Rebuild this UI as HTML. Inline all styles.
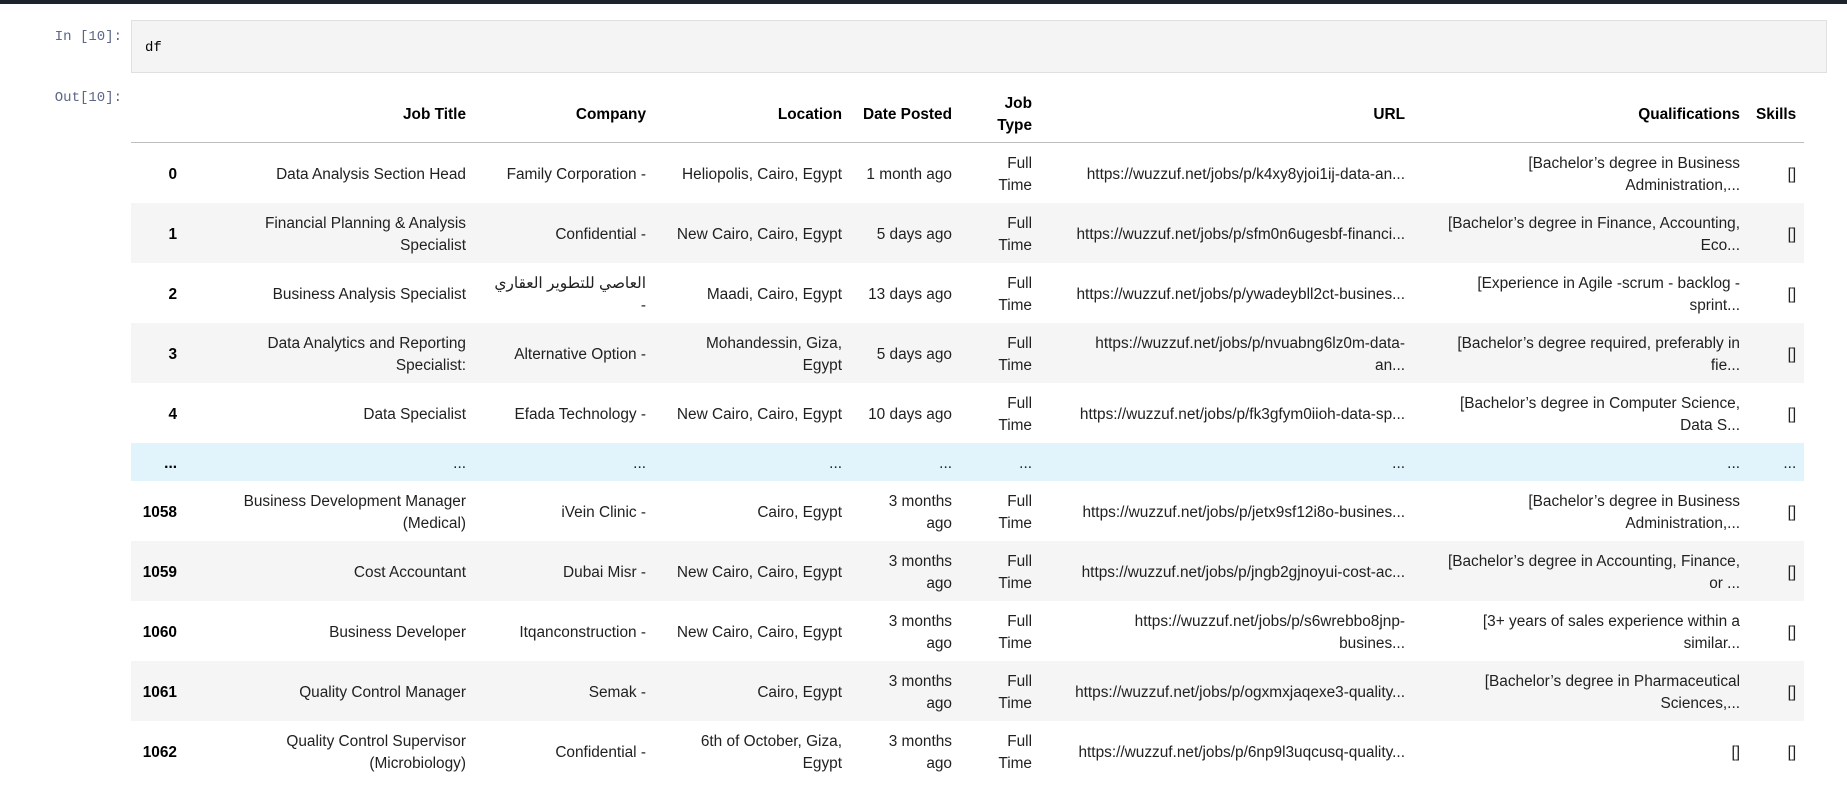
<!DOCTYPE html>
<html><head><meta charset="utf-8"><style>
body{margin:0;width:1847px;height:790px;overflow:hidden;background:#fff;font-family:"Liberation Sans","Noto Sans CJK SC",sans-serif;color:#212121;position:relative}
.bar{position:absolute;left:0;top:0;width:1847px;height:4px;background:#1d232a}
.prompt{position:absolute;font-family:"Liberation Mono",monospace;font-size:14px;color:#5d6685;text-align:right;width:120px;left:2px}
.code{position:absolute;left:131px;top:20px;width:1694px;height:51px;background:#f4f4f4;border:1px solid #e0e0e0;font-family:"Liberation Mono",monospace;font-size:14px}
.code span{position:absolute;left:13px;top:19px;color:#000}
table{position:absolute;left:131px;top:88px;border-collapse:collapse;table-layout:fixed;font-size:15.4px;line-height:22px}
td,th{text-align:right;padding:0 8px;white-space:nowrap;vertical-align:middle}
th{height:54px;font-weight:bold;border-bottom:1px solid #bdbdbd;color:#000}
td{height:57px;padding-top:3px}
td:first-child{font-weight:bold;color:#000;padding-right:36px}
tr.s td{background:#f5f5f5}
tr.e td{height:35px;background:#e1f4fc}
</style></head><body>
<div class="bar"></div>
<div class="prompt" style="top:29px">In [10]:</div>
<div class="code"><span>df</span></div>
<div class="prompt" style="top:90px">Out[10]:</div>
<table>
<colgroup><col style="width:82px"><col style="width:261px"><col style="width:180px"><col style="width:196px"><col style="width:110px"><col style="width:80px"><col style="width:373px"><col style="width:335px"><col style="width:53px"></colgroup>
<tr><th></th><th>Job Title</th><th>Company</th><th>Location</th><th>Date Posted</th><th>Job<br>Type</th><th>URL</th><th>Qualifications</th><th>Skills</th></tr>
<tr><td>0</td><td>Data Analysis Section Head</td><td>Family Corporation -</td><td>Heliopolis, Cairo, Egypt</td><td>1 month ago</td><td>Full<br>Time</td><td>https://wuzzuf.net/jobs/p/k4xy8yjoi1ij-data-an...</td><td>[Bachelor’s degree in Business<br>Administration,...</td><td>[]</td></tr>
<tr class="s"><td>1</td><td>Financial Planning &amp; Analysis<br>Specialist</td><td>Confidential -</td><td>New Cairo, Cairo, Egypt</td><td>5 days ago</td><td>Full<br>Time</td><td>https://wuzzuf.net/jobs/p/sfm0n6ugesbf-financi...</td><td>[Bachelor’s degree in Finance, Accounting,<br>Eco...</td><td>[]</td></tr>
<tr><td>2</td><td>Business Analysis Specialist</td><td>العاصي للتطوير العقاري<br>-</td><td>Maadi, Cairo, Egypt</td><td>13 days ago</td><td>Full<br>Time</td><td>https://wuzzuf.net/jobs/p/ywadeybll2ct-busines...</td><td>[Experience in Agile -scrum - backlog -<br>sprint...</td><td>[]</td></tr>
<tr class="s"><td>3</td><td>Data Analytics and Reporting<br>Specialist:</td><td>Alternative Option -</td><td>Mohandessin, Giza,<br>Egypt</td><td>5 days ago</td><td>Full<br>Time</td><td>https://wuzzuf.net/jobs/p/nvuabng6lz0m-data-<br>an...</td><td>[Bachelor’s degree required, preferably in<br>fie...</td><td>[]</td></tr>
<tr><td>4</td><td>Data Specialist</td><td>Efada Technology -</td><td>New Cairo, Cairo, Egypt</td><td>10 days ago</td><td>Full<br>Time</td><td>https://wuzzuf.net/jobs/p/fk3gfym0iioh-data-sp...</td><td>[Bachelor’s degree in Computer Science,<br>Data S...</td><td>[]</td></tr>
<tr class="e"><td>...</td><td>...</td><td>...</td><td>...</td><td>...</td><td>...</td><td>...</td><td>...</td><td>...</td></tr>
<tr><td>1058</td><td>Business Development Manager<br>(Medical)</td><td>iVein Clinic -</td><td>Cairo, Egypt</td><td>3 months<br>ago</td><td>Full<br>Time</td><td>https://wuzzuf.net/jobs/p/jetx9sf12i8o-busines...</td><td>[Bachelor’s degree in Business<br>Administration,...</td><td>[]</td></tr>
<tr class="s"><td>1059</td><td>Cost Accountant</td><td>Dubai Misr -</td><td>New Cairo, Cairo, Egypt</td><td>3 months<br>ago</td><td>Full<br>Time</td><td>https://wuzzuf.net/jobs/p/jngb2gjnoyui-cost-ac...</td><td>[Bachelor’s degree in Accounting, Finance,<br>or ...</td><td>[]</td></tr>
<tr><td>1060</td><td>Business Developer</td><td>Itqanconstruction -</td><td>New Cairo, Cairo, Egypt</td><td>3 months<br>ago</td><td>Full<br>Time</td><td>https://wuzzuf.net/jobs/p/s6wrebbo8jnp-<br>busines...</td><td>[3+ years of sales experience within a<br>similar...</td><td>[]</td></tr>
<tr class="s"><td>1061</td><td>Quality Control Manager</td><td>Semak -</td><td>Cairo, Egypt</td><td>3 months<br>ago</td><td>Full<br>Time</td><td>https://wuzzuf.net/jobs/p/ogxmxjaqexe3-quality...</td><td>[Bachelor’s degree in Pharmaceutical<br>Sciences,...</td><td>[]</td></tr>
<tr><td>1062</td><td>Quality Control Supervisor<br>(Microbiology)</td><td>Confidential -</td><td>6th of October, Giza,<br>Egypt</td><td>3 months<br>ago</td><td>Full<br>Time</td><td>https://wuzzuf.net/jobs/p/6np9l3uqcusq-quality...</td><td>[]</td><td>[]</td></tr>
</table>
</body></html>
